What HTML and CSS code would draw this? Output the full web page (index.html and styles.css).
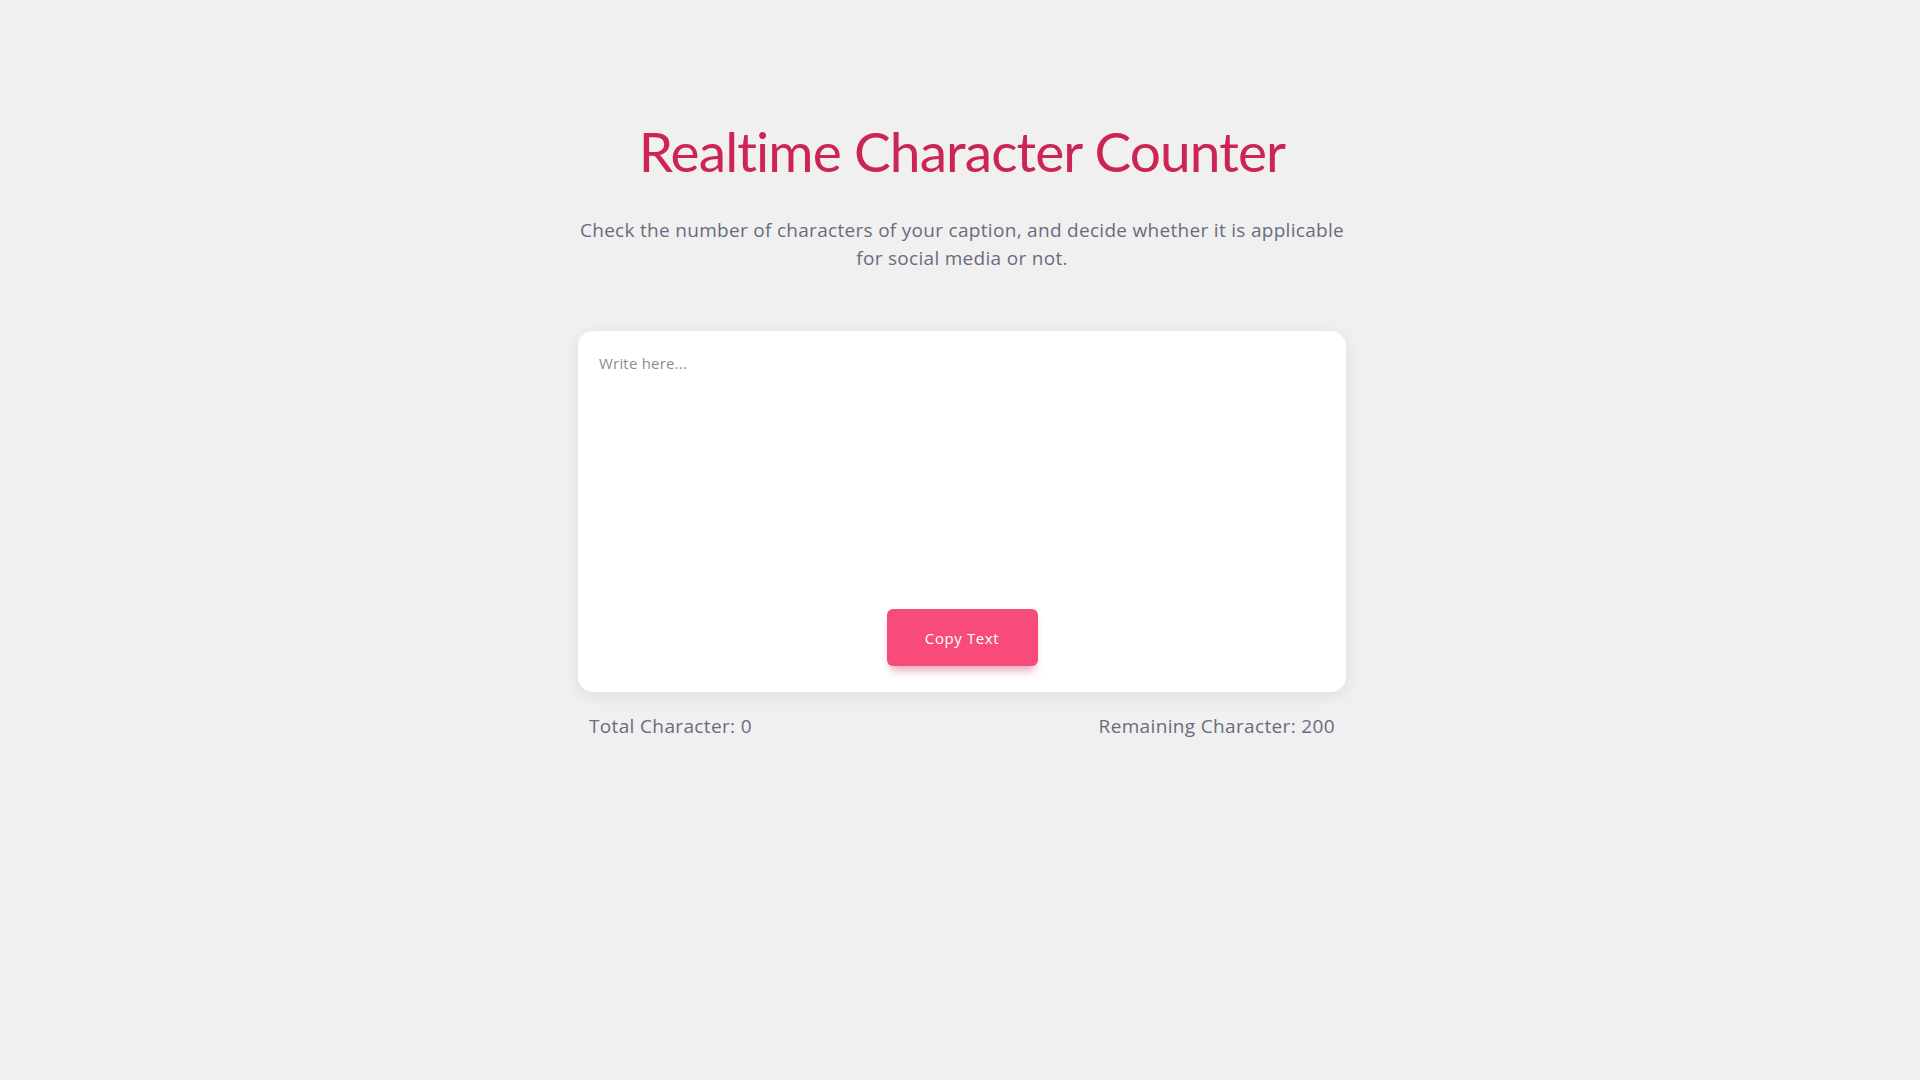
FILE: index.html
```html
<!DOCTYPE html>
<html lang="en">
<head>
<meta charset="utf-8">
<title>Realtime Character Counter</title>
<link rel="stylesheet" href="styles.css">
</head>
<body>
<main class="wrapper">
  <h1 class="title">Realtime Character Counter</h1>
  <p class="subtitle">Check the number of characters of your caption, and decide whether it is applicable for social media or not.</p>
  <div class="card">
    <textarea class="input" placeholder="Write here..."></textarea>
    <button class="copy-btn" type="button">Copy Text</button>
  </div>
  <div class="stats">
    <span class="stat">Total Character: 0</span>
    <span class="stat">Remaining Character: 200</span>
  </div>
</main>
</body>
</html>
```
FILE: styles.css
```css
* { box-sizing: border-box; }
html, body { margin: 0; padding: 0; }
body {
  background: #f0f0f0;
  font-family: "Open Sans", "Liberation Sans", sans-serif;
  min-height: 100vh;
  padding-left: 4px;
}
.wrapper {
  width: 768px;
  margin: 0 auto;
  padding-top: 111px;
  display: flex;
  flex-direction: column;
  align-items: stretch;
}
.title {
  margin: 0;
  text-align: center;
  font-family: "Lato", sans-serif;
  font-weight: 400;
  font-size: 55px;
  line-height: 80px;
  color: #cc2553;
  letter-spacing: -0.9px;
}
.subtitle {
  margin: 25px -10px 0;
  text-align: center;
  font-size: 19px;
  line-height: 28px;
  letter-spacing: 0.3px;
  color: #6b6b7e;
}
.card {
  margin-top: 59px;
  height: 361px;
  background: #ffffff;
  border-radius: 15px;
  box-shadow: 0 4px 16px rgba(0,0,0,0.08);
  padding: 22px 20px 26px;
  display: flex;
  flex-direction: column;
  align-items: center;
}
.input {
  width: 100%;
  flex: 1;
  border: none;
  outline: none;
  resize: none;
  background: transparent;
  font-family: "Open Sans", sans-serif;
  font-size: 15px;
  letter-spacing: 0.2px;
  color: #333;
  padding: 0 0 0 1px;
}
.input::placeholder { color: #8c8c8c; }
.copy-btn {
  width: 151px;
  height: 57px;
  border: none;
  border-radius: 6px;
  background: #f64b7b;
  color: #fff;
  font-family: "Open Sans", sans-serif;
  font-size: 15px;
  letter-spacing: 0.6px;
  box-shadow: 0 8px 10px -4px rgba(200, 40, 80, 0.45);
  cursor: pointer;
}
.stats {
  margin-top: 20px;
  padding: 0 11px;
  display: flex;
  justify-content: space-between;
}
.stat {
  font-size: 19px;
  line-height: 28px;
  letter-spacing: 0.35px;
  color: #6b6b7e;
}
```
